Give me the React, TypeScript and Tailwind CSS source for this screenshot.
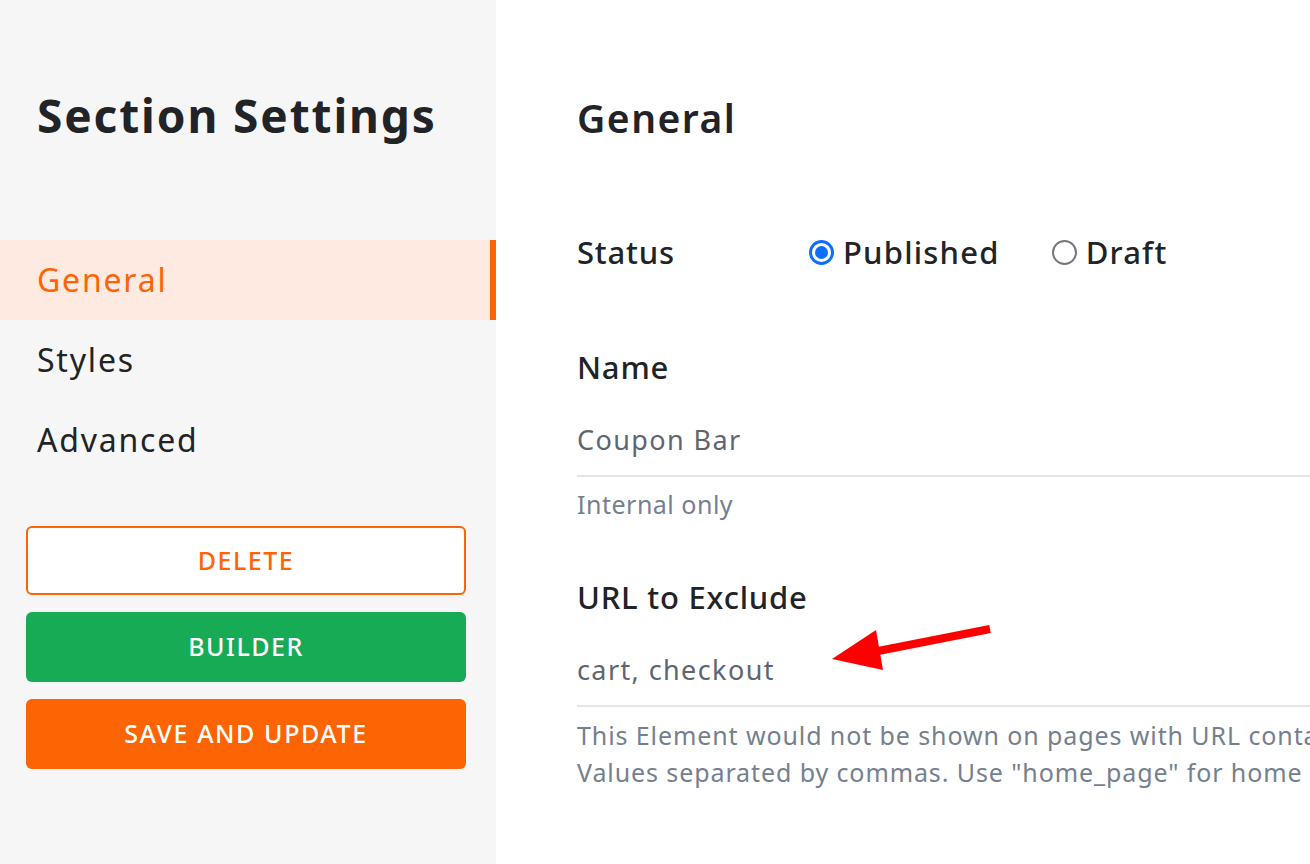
import React from 'react';

const font = { fontFamily: '"Noto Sans", "Open Sans", sans-serif' };

const navItems = ['General', 'Styles', 'Advanced'];

function Radio({ checked }: { checked?: boolean }) {
  if (checked) {
    return (
      <span className="flex h-[25px] w-[25px] items-center justify-center rounded-full border-[3px] border-[#0d6efd] bg-white">
        <span className="h-[13px] w-[13px] rounded-full bg-[#0d6efd]" />
      </span>
    );
  }
  return <span className="h-[25px] w-[25px] rounded-full border-2 border-[#767676] bg-white" />;
}

export default function App() {
  return (
    <div className="relative flex h-[864px] w-[1310px] overflow-hidden bg-white text-[#212326]" style={font}>
      {/* Sidebar */}
      <aside className="flex w-[496px] shrink-0 flex-col bg-[#f6f6f6] pt-[88px]">
        <h1 className="pl-[37px] text-[46px] font-bold leading-[54px] tracking-[1.9px]">Section Settings</h1>
        <nav className="mt-[98px] flex flex-col">
          {navItems.map((item, i) => (
            <div
              key={item}
              className={
                i === 0
                  ? 'flex h-20 items-center border-r-[6px] border-[#fc6404] bg-[#ffeae2] pl-[37px] text-[32px] tracking-[1.8px] text-[#fc6404]'
                  : 'flex h-20 items-center pl-[37px] text-[32px] tracking-[1.8px]'
              }
            >
              {item}
            </div>
          ))}
        </nav>
        <div className="mt-[46px] flex flex-col gap-[17px] pl-[26px] pr-[30px]">
          <button className="h-[69px] rounded-md border-2 border-[#fc6404] bg-white text-[25px] font-medium tracking-[1.5px] text-[#fc6404]">
            DELETE
          </button>
          <button className="h-[70px] rounded-md bg-[#18ab56] text-[25px] font-medium tracking-[1.5px] text-white">
            BUILDER
          </button>
          <button className="h-[70px] rounded-md bg-[#fc6404] text-[25px] font-medium tracking-[1.6px] text-white">
            SAVE AND UPDATE
          </button>
        </div>
      </aside>

      {/* Main */}
      <main className="min-w-0 flex-1 pl-[81px] pt-[94px]">
        <div className="w-[900px]">
          <h2 className="text-[39px] font-semibold leading-[48px] tracking-[1.5px]">General</h2>

          <div className="mt-[90px] flex h-10 items-center text-[31px] font-medium">
            <span className="w-[232px] tracking-[0.8px]">Status</span>
            <label className="flex items-center gap-[9px]">
              <Radio checked />
              <span className="tracking-[1.2px]">Published</span>
            </label>
            <label className="ml-[52px] flex items-center gap-[9px]">
              <Radio />
              <span className="tracking-[1.2px]">Draft</span>
            </label>
          </div>

          <div className="mt-[75px] text-[31px] font-medium leading-10 tracking-[0.8px]">Name</div>
          <div className="mt-[33px] border-b-2 border-[#e4e4e9] pb-[15px] text-[27px] leading-10 tracking-[1.4px] text-[#5e6570]">
            Coupon Bar
          </div>
          <div className="mt-[9px] text-[25px] leading-9 tracking-[0.5px] text-[#75808f]">Internal only</div>

          <div className="mt-[55px] text-[31px] font-medium leading-10 tracking-[0.8px]">URL to Exclude</div>
          <div className="mt-[33px] border-b-2 border-[#e4e4e9] pb-[15px] text-[27px] leading-10 tracking-[1.4px] text-[#5e6570]">
            cart, checkout
          </div>
          <div className="mt-[10px] whitespace-nowrap text-[25px] leading-[37px] tracking-[0.9px] text-[#75808f]">
            <div>This Element would not be shown on pages with URL containing these values.</div>
            <div>Values separated by commas. Use "home_page" for home page.</div>
          </div>
        </div>
      </main>

      {/* annotation arrow */}
      <svg className="pointer-events-none absolute left-0 top-0" width="1310" height="864">
        <line x1="990" y1="629" x2="868" y2="653" stroke="#ff0000" strokeWidth="8" />
        <polygon points="832,659 876,630 883,670" fill="#ff0000" />
      </svg>
    </div>
  );
}
